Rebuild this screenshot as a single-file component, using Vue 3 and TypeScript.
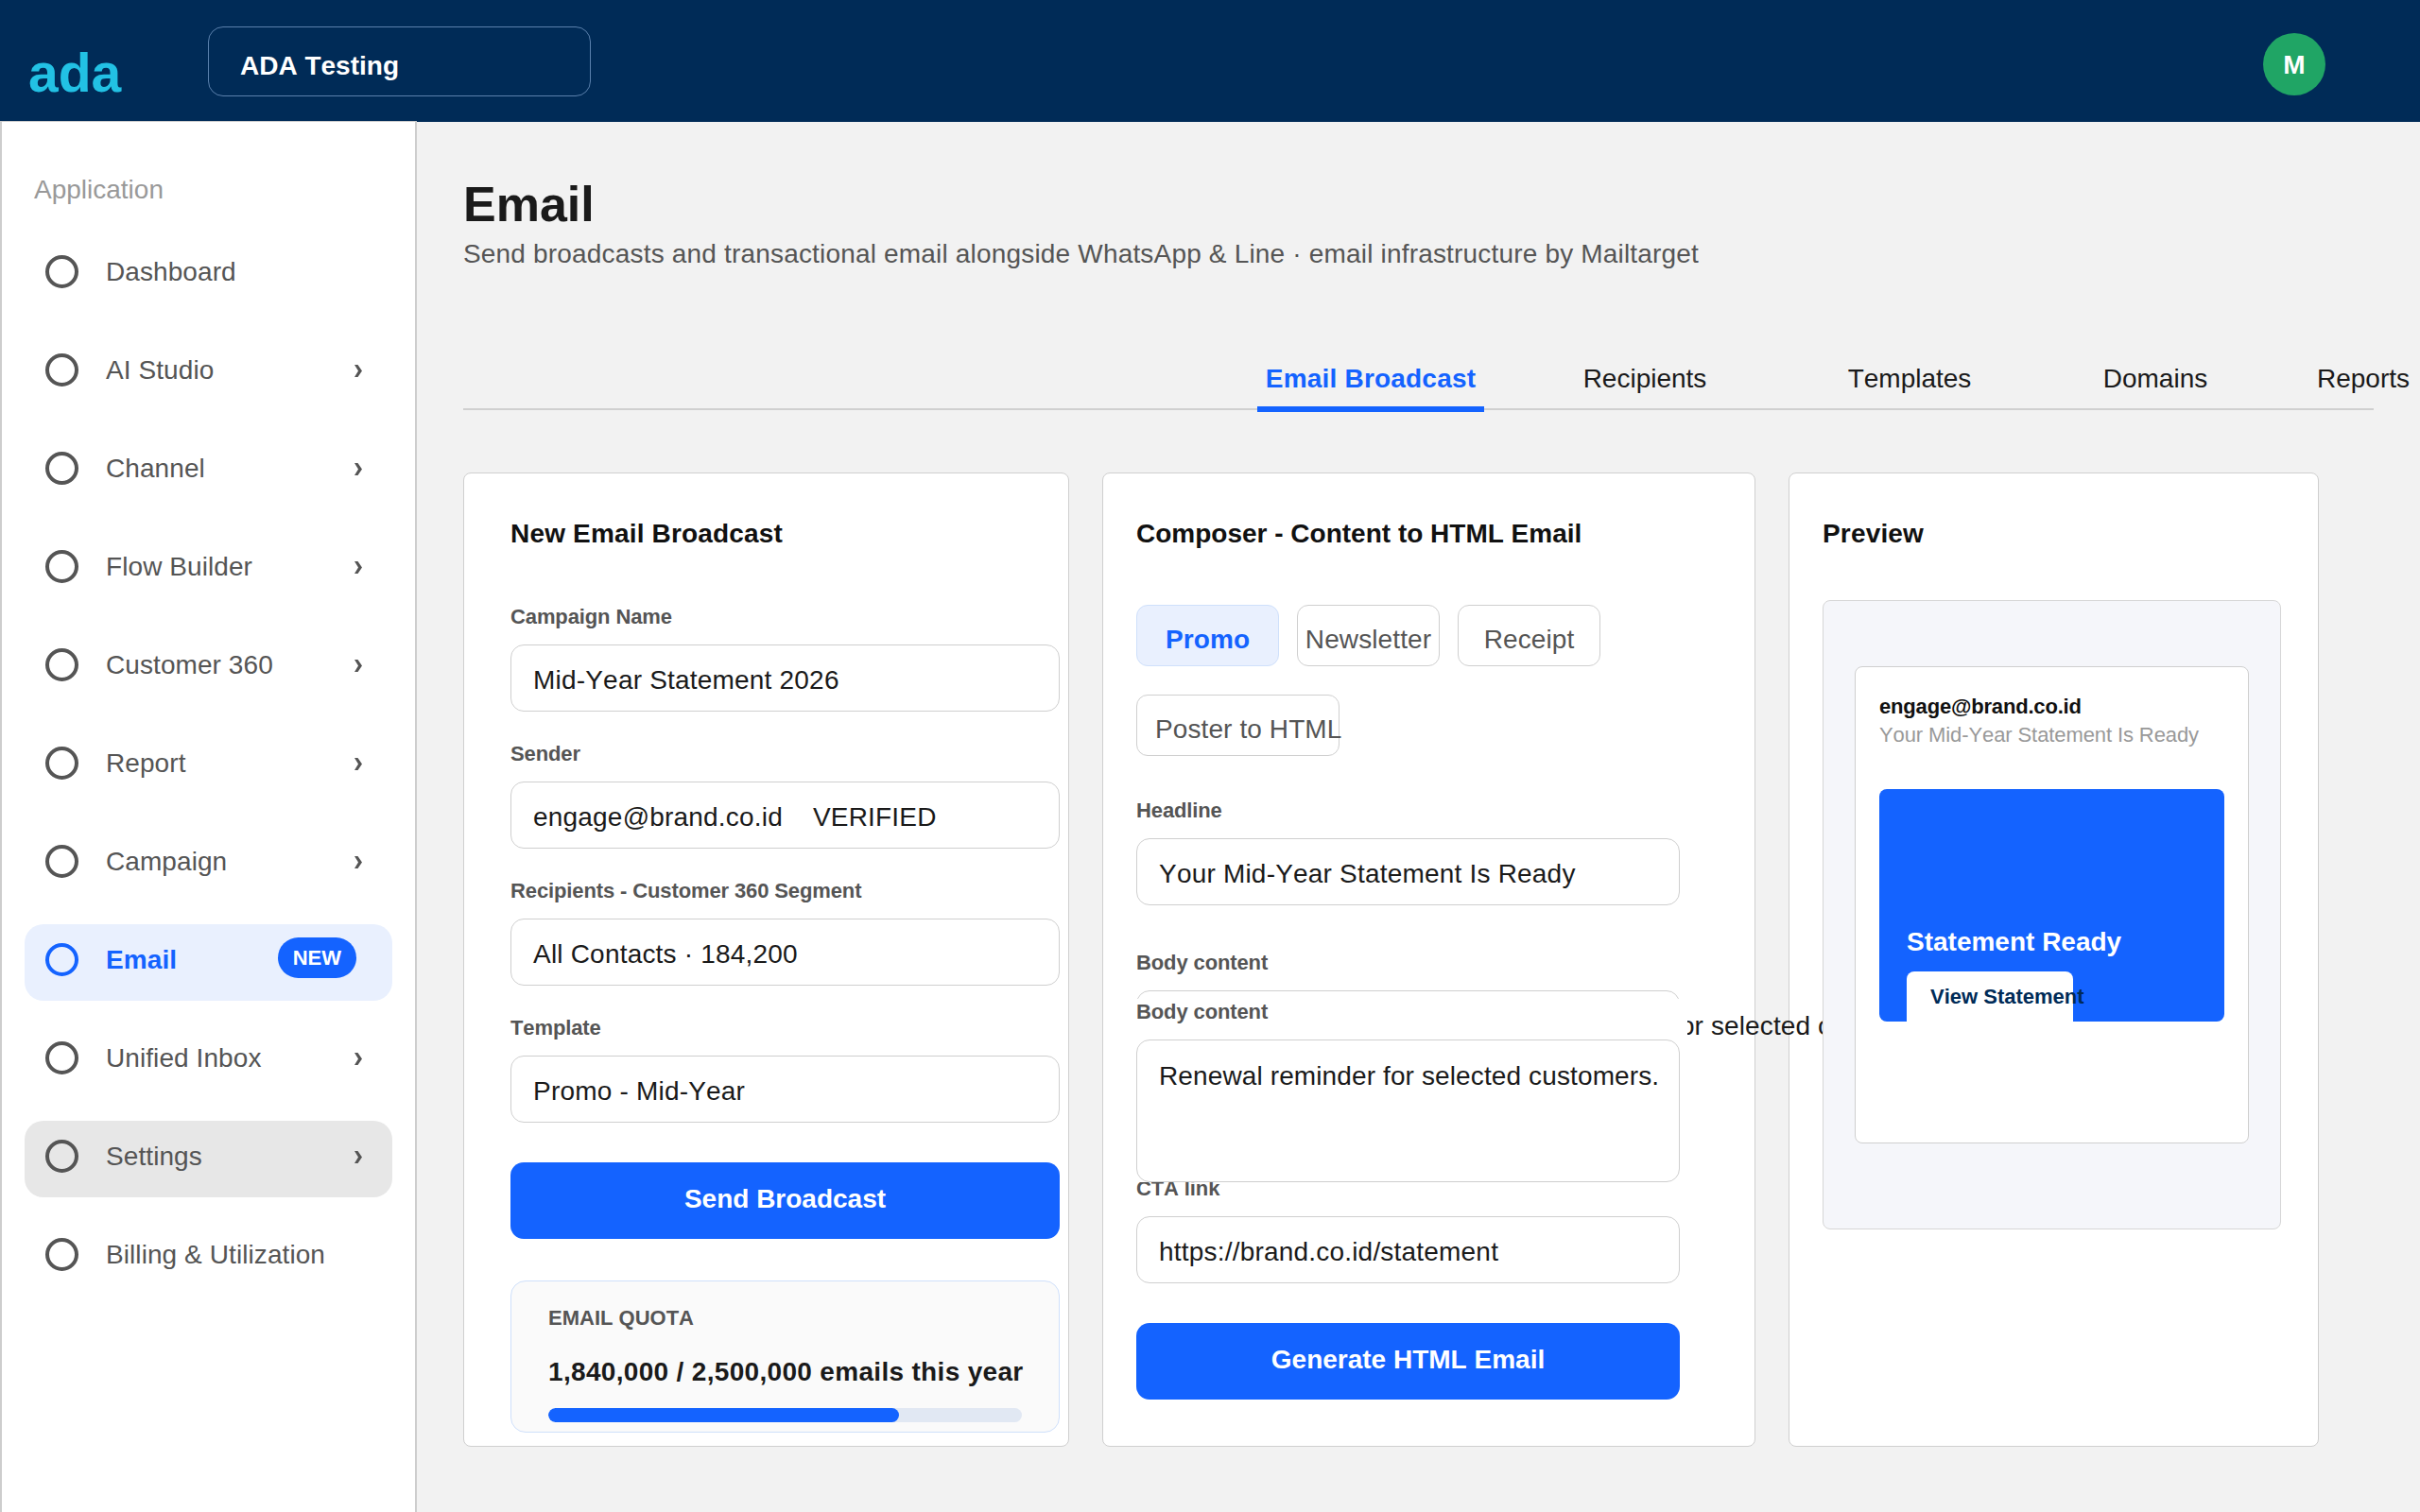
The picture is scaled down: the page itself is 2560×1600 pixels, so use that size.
<script setup lang="ts">
interface NavItem {
  label: string;
  chevron?: boolean;
  badge?: string;
  state?: 'active' | 'hover';
}

const navItems: NavItem[] = [
  { label: 'Dashboard' },
  { label: 'AI Studio', chevron: true },
  { label: 'Channel', chevron: true },
  { label: 'Flow Builder', chevron: true },
  { label: 'Customer 360', chevron: true },
  { label: 'Report', chevron: true },
  { label: 'Campaign', chevron: true },
  { label: 'Email', badge: 'NEW', state: 'active' },
  { label: 'Unified Inbox', chevron: true },
  { label: 'Settings', chevron: true, state: 'hover' },
  { label: 'Billing & Utilization' },
];

const tabs = ['Email Broadcast', 'Recipients', 'Templates', 'Domains', 'Reports'];

const broadcastFields = [
  { label: 'Campaign Name', value: 'Mid-Year Statement 2026' },
  { label: 'Sender', value: 'engage@brand.co.id\u00a0\u00a0\u00a0\u00a0VERIFIED' },
  { label: 'Recipients - Customer 360 Segment', value: 'All Contacts · 184,200' },
  { label: 'Template', value: 'Promo - Mid-Year' },
];

const bodyText = 'Renewal reminder for selected customers.';
const used = 1840000;
const quota = 2500000;
</script>

<template>
  <div class="page">
    <header class="topbar">
      <div class="logo">ada</div>
      <div class="workspace">ADA Testing</div>
      <div class="avatar">M</div>
    </header>

    <div class="body">
      <aside class="sidebar">
        <div class="side-title">Application</div>
        <nav class="nav">
          <a
            v-for="item in navItems"
            :key="item.label"
            class="nav-item"
            :class="item.state"
          >
            <span class="nav-dot"></span>
            <span class="nav-label">{{ item.label }}</span>
            <span v-if="item.badge" class="nav-badge">{{ item.badge }}</span>
            <svg v-if="item.chevron" class="nav-chevron" viewBox="0 0 8 13">
              <polygon points="0,0 3.5,0 8,6.5 3.5,13 0,13 4,6.5" />
            </svg>
          </a>
        </nav>
      </aside>

      <main class="main">
        <h1 class="page-title">Email</h1>
        <p class="page-sub">Send broadcasts and transactional email alongside WhatsApp &amp; Line · email infrastructure by Mailtarget</p>

        <div class="tabs">
          <div
            v-for="(tab, i) in tabs"
            :key="tab"
            class="tab"
            :class="{ selected: i === 0 }"
          >{{ tab }}</div>
        </div>

        <div class="columns">
          <section class="card card-form">
            <h2 class="card-title">New Email Broadcast</h2>
            <div class="form-stack">
              <div v-for="field in broadcastFields" :key="field.label" class="group">
                <div class="label">{{ field.label }}</div>
                <div class="field">{{ field.value }}</div>
              </div>
            </div>
            <button class="primary send">Send Broadcast</button>
            <div class="quota">
              <div class="quota-title">EMAIL QUOTA</div>
              <div class="quota-value">1,840,000 / 2,500,000 emails this year</div>
              <div class="quota-track">
                <div class="quota-fill" :style="{ width: Math.ceil((used / quota) * 100) + '%' }"></div>
              </div>
            </div>
          </section>

          <section class="card card-composer">
            <h2 class="card-title">Composer - Content to HTML Email</h2>
            <div class="chips">
              <button class="chip on">Promo</button>
              <button class="chip">Newsletter</button>
              <button class="chip">Receipt</button>
              <button class="chip poster">Poster to HTML</button>
            </div>
            <div class="label headline-label">Headline</div>
            <div class="field">Your Mid-Year Statement Is Ready</div>

            <div class="label body-label">Body content</div>
            <div class="field ghost">
              <span class="stray">{{ bodyText }}</span>
            </div>
            <div class="body-group">
              <div class="label">Body content</div>
              <div class="field area">{{ bodyText }}</div>
            </div>

            <div class="label cta-label">CTA link</div>
            <div class="field">https://brand.co.id/statement</div>
            <button class="primary generate">Generate HTML Email</button>
          </section>

          <section class="card card-preview">
            <h2 class="card-title">Preview</h2>
            <div class="preview-frame">
              <div class="mail">
                <div class="mail-from">engage@brand.co.id</div>
                <div class="mail-subject">Your Mid-Year Statement Is Ready</div>
                <div class="banner">
                  <div class="banner-title">Statement Ready</div>
                  <div class="banner-btn">View Statement</div>
                </div>
              </div>
            </div>
          </section>
        </div>
      </main>
    </div>
  </div>
</template>

<style scoped>
.page {
  width: 2560px;
  height: 1600px;
  display: flex;
  flex-direction: column;
  overflow: hidden;
  background: #f2f2f2;
  color: #111;
  font-family: "Liberation Sans", Arial, sans-serif;
  font-kerning: none;
}

.topbar {
  height: 129px;
  flex: none;
  display: flex;
  align-items: center;
  background: #002b57;
  padding-left: 30px;
  padding-right: 100px;
}

.logo {
  width: 190px;
  margin-top: 25px;
  font-size: 57px;
  line-height: 64px;
  font-weight: 700;
  color: #22c1e4;
}

.workspace {
  width: 405px;
  height: 74px;
  margin-top: 1px;
  padding-left: 33px;
  box-sizing: border-box;
  border: 1px solid #5a80ac;
  border-radius: 16px;
  font-size: 28px;
  font-weight: 700;
  line-height: 82px;
  color: #fff;
}

.avatar {
  width: 66px;
  height: 66px;
  margin-left: auto;
  margin-top: 6px;
  border-radius: 50%;
  background: #20a565;
  color: #fff;
  font-size: 28px;
  font-weight: 700;
  display: flex;
  align-items: center;
  justify-content: center;
  padding-top: 3px;
  box-sizing: border-box;
}

.body {
  flex: 1;
  display: flex;
  min-height: 0;
}

.sidebar {
  width: 441px;
  flex: none;
  margin-top: -1px;
  box-sizing: border-box;
  background: #fff;
  border: 2px solid #cdcdcd;
  border-top-width: 1px;
  border-bottom: none;
  padding: 56px 24px 0;
}

.side-title {
  padding-left: 10px;
  font-size: 28px;
  line-height: 32px;
  color: #999;
}

.nav {
  margin-top: 33px;
  display: flex;
  flex-direction: column;
  gap: 23px;
}

.nav-item {
  height: 81px;
  box-sizing: border-box;
  display: flex;
  align-items: center;
  padding: 0 22px 7px;
  border-radius: 20px;
  color: #555;
  font-size: 28px;
}

.nav-item.active {
  background: #e9f0fe;
  color: #1463ff;
  font-weight: 700;
}

.nav-item.hover {
  background: #e7e7e7;
}

.nav-dot {
  width: 35px;
  height: 35px;
  flex: none;
  box-sizing: border-box;
  border: 4px solid currentColor;
  border-radius: 50%;
  margin-right: 29px;
}

.nav-label {
  flex: 1;
  margin-top: 2px;
  letter-spacing: 0.08px;
}

.nav-badge {
  margin-right: 16px;
  margin-top: -3px;
  height: 43px;
  padding: 0 16px;
  border-radius: 22px;
  background: #1463ff;
  color: #fff;
  font-size: 22px;
  line-height: 43px;
  font-weight: 700;
}

.nav-chevron {
  width: 8px;
  height: 13px;
  flex: none;
  margin-right: 10px;
  margin-top: 3px;
  fill: #555;
}

.main {
  flex: 1;
  min-width: 0;
  padding: 57px 0 0 49px;
}

.page-title {
  margin: 0;
  font-size: 52px;
  line-height: 60px;
  font-weight: 700;
  color: #1a1a1a;
}

.page-sub {
  margin: 5px 0 0;
  font-size: 28px;
  line-height: 36px;
  letter-spacing: 0.18px;
  color: #555;
}

.tabs {
  width: 2021px;
  height: 51px;
  box-sizing: border-box;
  margin-top: 96px;
  padding-left: 840px;
  display: flex;
  border-bottom: 2px solid #d0d0d0;
}

.tab {
  flex: none;
  height: 53px;
  box-sizing: border-box;
  text-align: center;
  font-size: 28px;
  line-height: 36px;
  color: #1a1a1a;
  white-space: nowrap;
}

.tab:nth-child(1) { width: 240px; }
.tab:nth-child(2) { width: 340px; }
.tab:nth-child(3) { width: 220px; }
.tab:nth-child(4) { width: 300px; }
.tab:nth-child(5) { width: 140px; }

.tab.selected {
  color: #1463ff;
  font-weight: 700;
  letter-spacing: 0.2px;
  border-bottom: 6px solid #1463ff;
}

.columns {
  margin-top: 66px;
  display: flex;
  gap: 35px;
  height: 1031px;
}

.card {
  box-sizing: border-box;
  flex: none;
  background: #fff;
  border: 1px solid #cfcfcf;
  border-radius: 8px;
  padding-top: 48px;
}

.card-form { width: 641px; padding-left: 49px; }
.card-composer { width: 691px; padding-left: 35px; }
.card-preview { width: 561px; padding-left: 35px; }

.card-title {
  margin: 0;
  font-size: 28px;
  line-height: 32px;
  font-weight: 700;
  color: #111;
}

.card-form .card-title,
.card-preview .card-title {
  letter-spacing: 0.17px;
}

.form-stack {
  margin-top: 58px;
  width: 581px;
  display: flex;
  flex-direction: column;
  gap: 31px;
}

.label {
  height: 26px;
  margin-bottom: 17px;
  font-size: 22px;
  line-height: 28px;
  font-weight: 700;
  letter-spacing: -0.12px;
  color: #555;
}

.field {
  height: 71px;
  box-sizing: border-box;
  padding: 3px 22px 0 23px;
  border: 1px solid #cfcfcf;
  border-radius: 14px;
  background: #fff;
  font-size: 28px;
  line-height: 67px;
  letter-spacing: 0.2px;
  color: #1a1a1a;
  white-space: nowrap;
}

.primary {
  display: block;
  height: 81px;
  border: none;
  border-radius: 14px;
  background: #1463ff;
  color: #fff;
  font-family: inherit;
  font-kerning: none;
  font-size: 28px;
  font-weight: 700;
  padding: 0 0 3px;
}

.send {
  width: 581px;
  margin-top: 42px;
}

.quota {
  width: 581px;
  height: 161px;
  box-sizing: border-box;
  margin-top: 44px;
  padding: 26px 39px 0;
  border: 1px solid #cfe0fb;
  border-radius: 16px;
  background: #fafafa;
}

.quota-title {
  font-size: 22px;
  line-height: 26px;
  font-weight: 700;
  color: #555;
}

.quota-value {
  margin-top: 26px;
  font-size: 28px;
  line-height: 36px;
  font-weight: 700;
  letter-spacing: 0.32px;
  color: #1a1a1a;
  white-space: nowrap;
}

.quota-track {
  margin-top: 20px;
  height: 15px;
  border-radius: 8px;
  background: #e1e8f3;
  overflow: hidden;
}

.quota-fill {
  height: 100%;
  border-radius: 8px;
  background: #1463ff;
}

.chips {
  margin-top: 59px;
  display: flex;
  flex-wrap: wrap;
  gap: 30px 19px;
}

.chip {
  width: 151px;
  height: 65px;
  box-sizing: border-box;
  padding: 8px 0 0;
  border: 1px solid #cfcfcf;
  border-radius: 12px;
  background: #fff;
  color: #555;
  font-family: inherit;
  font-kerning: none;
  font-size: 28px;
  letter-spacing: 0.1px;
  white-space: nowrap;
}

.chip.on {
  background: #e9f0fe;
  border-color: #cfe0fb;
  color: #1463ff;
  font-weight: 700;
}

.chip.poster {
  width: 215px;
  padding-left: 19px;
  text-align: left;
}

.headline-label {
  margin-top: 44px;
}

.card-composer .field {
  width: 575px;
}

.body-label {
  margin-top: 47px;
}

/* the first box is almost fully covered by the second group, only its text pokes out */
.field.ghost {
  position: relative;
}

.stray {
  position: absolute;
  left: 329px;
  top: 3px;
  z-index: 1;
  letter-spacing: 0.12px;
}

.body-group {
  position: relative;
  z-index: 3;
  width: 583px;
  margin-top: -62px;
  background: #fff;
}

.field.area {
  height: 151px;
  line-height: 69px;
  letter-spacing: 0.12px;
}

.cta-label {
  margin-top: -7px;
}

.generate {
  width: 575px;
  margin-top: 42px;
}

.preview-frame {
  position: relative;
  z-index: 2;
  width: 485px;
  height: 666px;
  box-sizing: border-box;
  margin-top: 54px;
  padding: 69px 33px 0;
  border: 1px solid #d6d6d6;
  border-radius: 8px;
  background: #f5f6fa;
}

.mail {
  height: 505px;
  box-sizing: border-box;
  padding: 28px 25px 0;
  border: 1px solid #cfcfcf;
  border-radius: 8px;
  background: #fff;
}

.mail-from {
  font-size: 22px;
  line-height: 28px;
  font-weight: 700;
  letter-spacing: -0.18px;
  color: #111;
}

.mail-subject {
  margin-top: 2px;
  font-size: 22px;
  line-height: 28px;
  letter-spacing: -0.1px;
  color: #999;
  white-space: nowrap;
}

.banner {
  height: 246px;
  margin-top: 43px;
  padding: 146px 0 0 29px;
  box-sizing: border-box;
  border-radius: 8px;
  background: #1463ff;
  overflow: hidden;
}

.banner-title {
  font-size: 28px;
  line-height: 32px;
  font-weight: 700;
  color: #fff;
}

.banner-btn {
  width: 176px;
  height: 60px;
  box-sizing: border-box;
  margin-top: 15px;
  padding: 13px 0 0 25px;
  border-radius: 8px;
  background: #fff;
  color: #002b57;
  font-size: 22px;
  line-height: 28px;
  font-weight: 700;
  white-space: nowrap;
}
</style>

<style>
html,
body {
  margin: 0;
  background: #f2f2f2;
}
</style>
